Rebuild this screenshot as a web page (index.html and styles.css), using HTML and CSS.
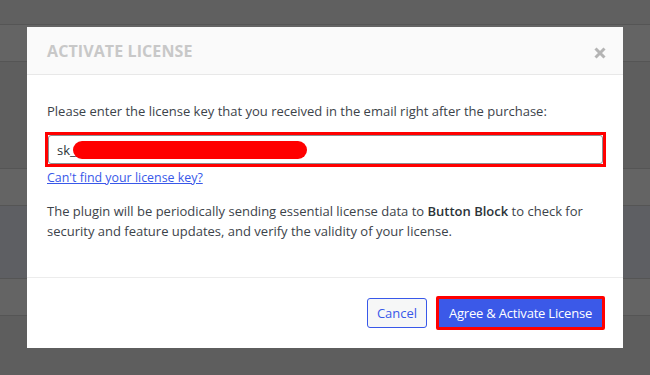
FILE: index.html
```html
<!DOCTYPE html>
<html>
<head>
<meta charset="utf-8">
<link rel="stylesheet" href="styles.css">
</head>
<body>
<div class="page">
  <div class="row r-top"></div>
  <div class="row r-a"></div>
  <div class="row r-b"></div>
  <div class="row r-a"></div>
  <div class="row r-c"></div>
  <div class="row r-a"></div>
  <div class="row r-end"></div>
</div>
<div class="modal">
  <div class="modal-header">
    <h2 class="modal-title">Activate License</h2>
    <span class="close">
      <svg width="12" height="12" viewBox="0 0 12 12"><path d="M1.5 1.5 L10.5 10.5 M10.5 1.5 L1.5 10.5" stroke="#b4b4b4" stroke-width="3" stroke-linecap="butt"/></svg>
    </span>
  </div>
  <div class="modal-body">
    <p class="intro">Please enter the license key that you received in the email right after the purchase:</p>
    <div class="key-mark">
      <div class="key-input"><span class="key-text">sk_</span><span class="redact"></span></div>
    </div>
    <a class="help-link" href="#">Can't find your license key?</a>
    <p class="note">The plugin will be periodically sending essential license data to <strong>Button Block</strong> to check for security and feature updates, and verify the validity of your license.</p>
  </div>
  <div class="modal-footer">
    <button class="btn btn-cancel">Cancel</button>
    <button class="btn btn-primary">Agree &amp; Activate License</button>
  </div>
</div>
</body>
</html>
```

FILE: styles.css
```css
html, body {
  margin: 0;
  padding: 0;
}
body {
  width: 650px;
  height: 375px;
  overflow: hidden;
  background: #5e5e5e;
  font-family: "Open Sans", "Noto Sans", sans-serif;
  position: relative;
}
.page {
  display: flex;
  flex-direction: column;
}
.row {
  border-bottom: 1px solid #555555;
}
.r-top { height: 24px; background: #606060; }
.r-a { height: 36px; background: #646464; }
.r-b { height: 106px; background: #5e5e5e; }
.r-c { height: 72px; background: #5e5f63; }
.r-end { height: 60px; background: #5e5e5e; border-bottom: none; }

.modal {
  position: absolute;
  left: 27px;
  top: 27px;
  width: 596px;
  height: 321px;
  background: #ffffff;
  display: flex;
  flex-direction: column;
}
.modal-header {
  height: 47px;
  background: #fafafa;
  border-bottom: 1px solid #e8e8e8;
  display: flex;
  align-items: center;
  justify-content: space-between;
  padding: 0 17px 0 20px;
}
.modal-title {
  margin: 0;
  font-size: 16px;
  font-weight: 700;
  text-transform: uppercase;
  color: #c8c8c8;
  letter-spacing: 0.1px;
}
.close {
  display: flex;
  margin-top: 4px;
}
.modal-body {
  padding: 26px 17px 0 18px;
  flex: 1;
  color: #3c434a;
  font-size: 13px;
}
.intro {
  margin: 0 0 11px 2px;
  line-height: 20px;
}
.key-mark {
  border: 3px solid #ff0000;
  height: 29px;
}
.key-input {
  height: 27px;
  border: 1px solid #8c8f94;
  border-radius: 3px;
  display: flex;
  align-items: center;
  padding-left: 8px;
  background: #fff;
}
.key-text {
  font-size: 13px;
  color: #2c3338;
}
.redact {
  display: inline-block;
  width: 234px;
  height: 18px;
  border-radius: 9px;
  background: #ff0000;
  margin-left: -3px;
}
.help-link {
  display: block;
  width: max-content;
  margin: 2px 0 0 2px;
  line-height: 18px;
  color: #3858e9;
  font-size: 12.4px;
}
.note {
  margin: 14px 3px 0 2px;
  line-height: 20px;
}
.note strong {
  font-weight: 600;
  color: #2c3338;
}
.modal-footer {
  height: 70px;
  border-top: 1px solid #ececec;
  display: flex;
  align-items: center;
  justify-content: flex-end;
  gap: 9px;
  padding-right: 18px;
}
.btn {
  font-family: "Open Sans", "Noto Sans", sans-serif;
  font-size: 13px;
  cursor: pointer;
  box-sizing: border-box;
}
.btn-cancel {
  width: 60px;
  height: 30px;
  border: 1px solid #3858e9;
  border-radius: 3px;
  background: #f6f7f7;
  color: #3858e9;
  padding: 0;
}
.btn-primary {
  width: 169px;
  height: 34px;
  border: 3px solid #ff0000;
  border-radius: 2px;
  background: #3b59e8;
  color: #ffffff;
  padding: 0;
  letter-spacing: -0.2px;
}
```
